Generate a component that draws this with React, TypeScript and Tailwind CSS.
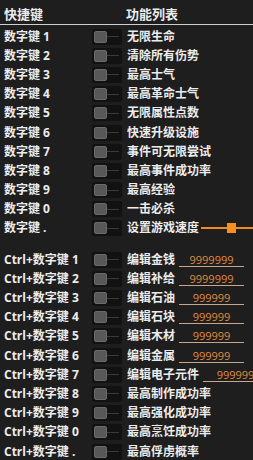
import React from "react";

const font = { fontFamily: '"Open Sans", "Noto Sans CJK SC", sans-serif' };

function Toggle() {
  return (
    <div className="flex items-center w-[30px] h-[16px] p-[2px] bg-[#121212] rounded-[2px] shrink-0">
      <div className="w-[13px] h-[12px] rounded-[2px] bg-[#585858] border border-[#6a6a6a] shrink-0" />
      <div className="flex-1 h-px bg-[#3a3a3a] mr-[1px]" />
    </div>
  );
}

type Row = { key: string; fn: string; extra?: "slider" | "input"; val?: string };

const group1: Row[] = [
  { key: "数字键 1", fn: "无限生命" },
  { key: "数字键 2", fn: "清除所有伤势" },
  { key: "数字键 3", fn: "最高士气" },
  { key: "数字键 4", fn: "最高革命士气" },
  { key: "数字键 5", fn: "无限属性点数" },
  { key: "数字键 6", fn: "快速升级设施" },
  { key: "数字键 7", fn: "事件可无限尝试" },
  { key: "数字键 8", fn: "最高事件成功率" },
  { key: "数字键 9", fn: "最高经验" },
  { key: "数字键 0", fn: "一击必杀" },
  { key: "数字键 .", fn: "设置游戏速度", extra: "slider" },
];

const group2: Row[] = [
  { key: "Ctrl+数字键 1", fn: "编辑金钱", extra: "input", val: "9999999" },
  { key: "Ctrl+数字键 2", fn: "编辑补给", extra: "input", val: "9999999" },
  { key: "Ctrl+数字键 3", fn: "编辑石油", extra: "input", val: "999999" },
  { key: "Ctrl+数字键 4", fn: "编辑石块", extra: "input", val: "999999" },
  { key: "Ctrl+数字键 5", fn: "编辑木材", extra: "input", val: "999999" },
  { key: "Ctrl+数字键 6", fn: "编辑金属", extra: "input", val: "999999" },
  { key: "Ctrl+数字键 7", fn: "编辑电子元件", extra: "input", val: "999999" },
  { key: "Ctrl+数字键 8", fn: "最高制作成功率" },
  { key: "Ctrl+数字键 9", fn: "最高强化成功率" },
  { key: "Ctrl+数字键 0", fn: "最高烹饪成功率" },
  { key: "Ctrl+数字键 .", fn: "最高俘虏概率" },
];

function RowView({ r }: { r: Row }) {
  return (
    <div className="flex items-center h-[19.2px] whitespace-nowrap">
      <div className="w-[92px] shrink-0 pl-[4px] text-[12px] font-bold text-[#ececec] leading-none">
        {r.key}
      </div>
      <Toggle />
      <div className="flex items-center ml-[5px]">
        <span className="text-[12px] font-bold text-[#ececec] leading-none">{r.fn}</span>
        {r.extra === "slider" && (
          <div className="flex items-center ml-[2px] w-[60px] h-[12px] shrink-0">
            <div className="w-[26px] h-[2px] bg-[#f28a1e]" />
            <div className="w-[9px] h-[10px] bg-[#f7901f]" />
            <div className="flex-1 h-[2px] bg-[#f28a1e]" />
          </div>
        )}
        {r.extra === "input" && (
          <div className="ml-[4px] w-[65px] h-[14px] shrink-0 border-b border-[#c9a58a] flex items-end justify-center">
            <span className="text-[11px] leading-none text-[#e08a3e] mb-[1px]">{r.val}</span>
          </div>
        )}
      </div>
    </div>
  );
}

export default function App() {
  return (
    <div className="w-[253px] h-[460px] overflow-hidden bg-[#1e1e1e]" style={font}>
      <div className="flex items-center h-[24px] pt-[4px] text-[13px] font-bold text-[#ececec] leading-none">
        <span className="w-[126px] pl-[4px]">快捷键</span>
        <span>功能列表</span>
      </div>
      <div className="h-px bg-[#cfcfcf]" />
      <div className="flex flex-col pt-[2px]">
        {group1.map((r) => (
          <RowView key={r.key} r={r} />
        ))}
      </div>
      <div className="flex flex-col pt-[12px]">
        {group2.map((r) => (
          <RowView key={r.key} r={r} />
        ))}
      </div>
    </div>
  );
}
